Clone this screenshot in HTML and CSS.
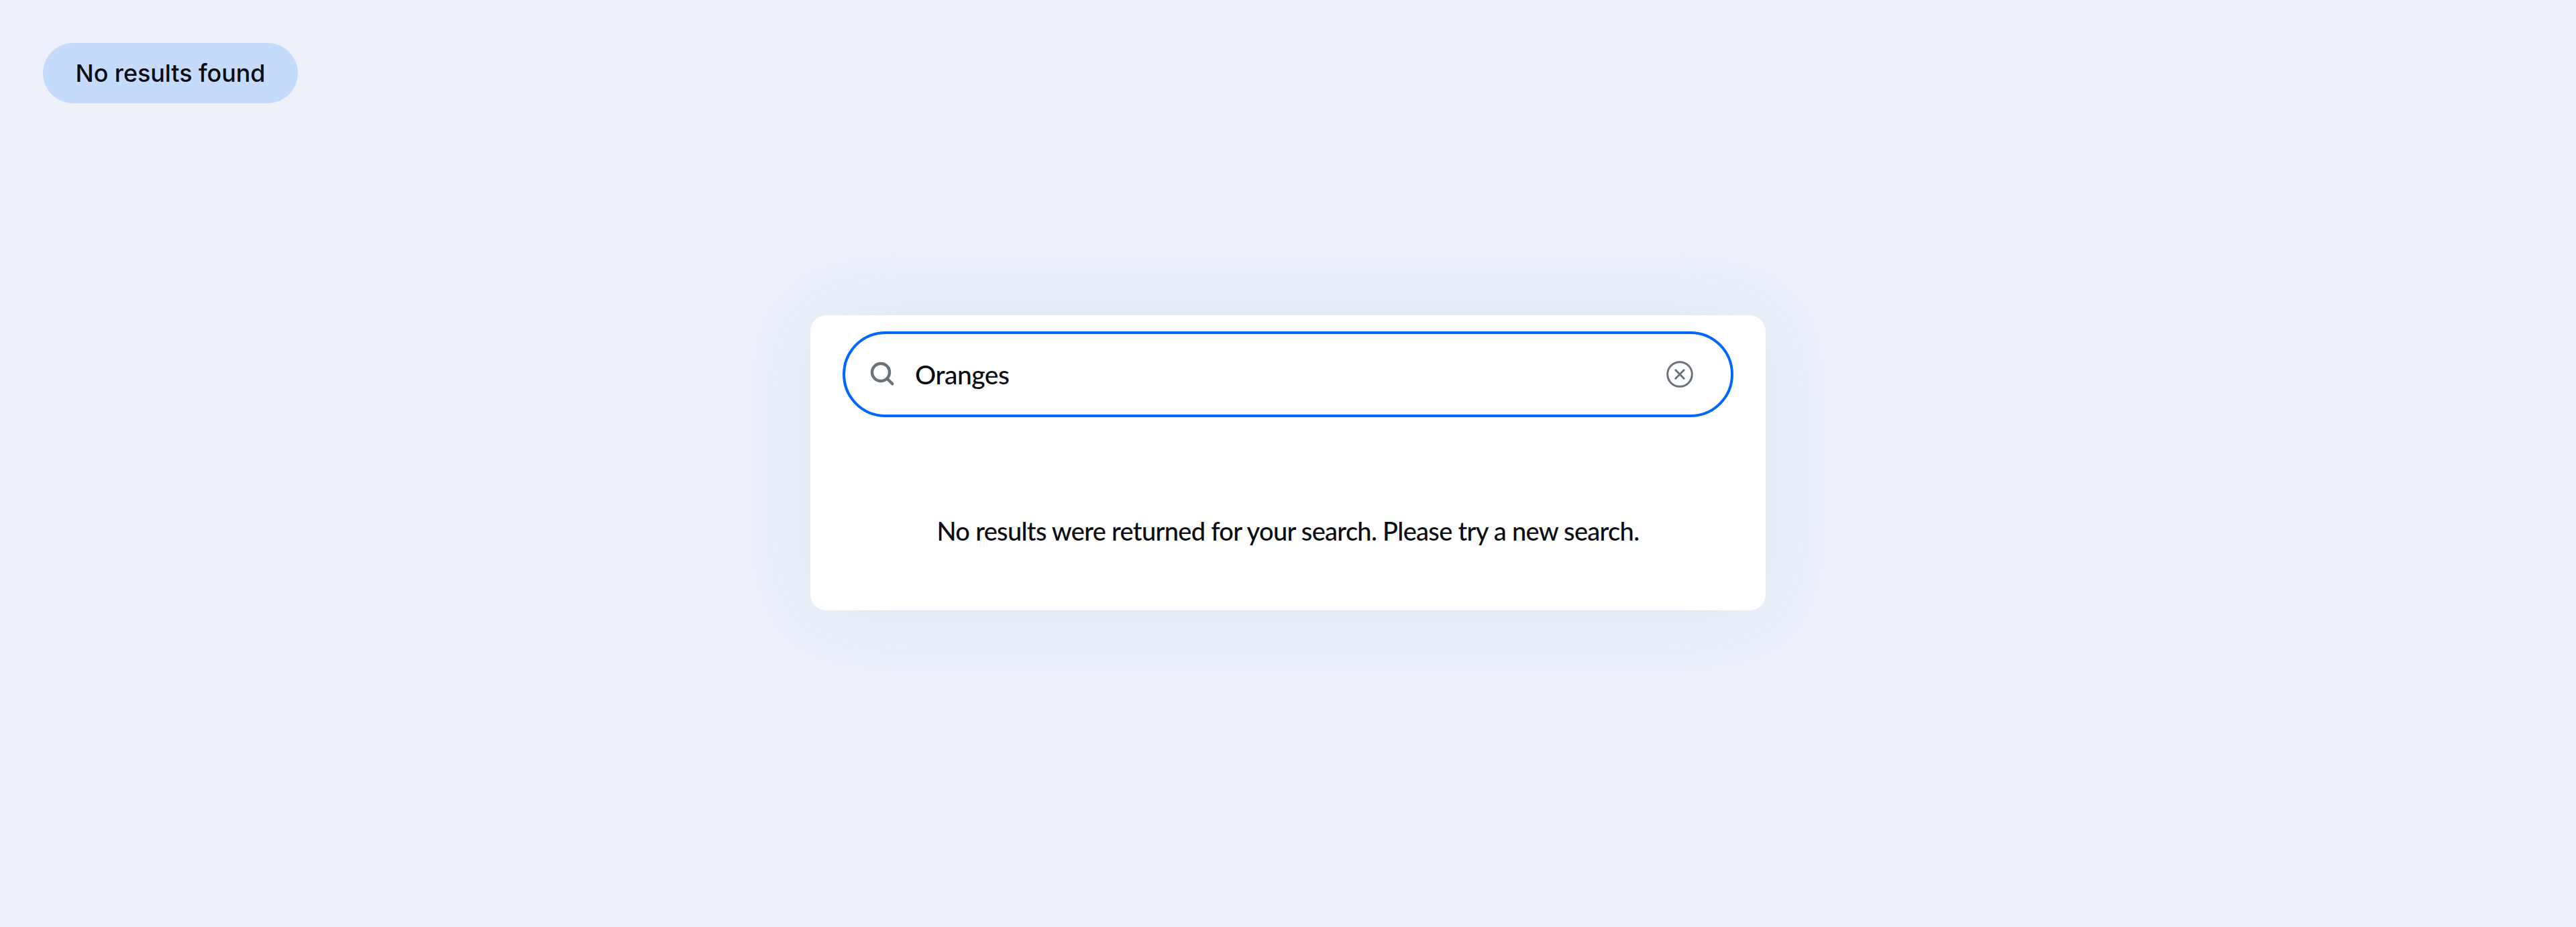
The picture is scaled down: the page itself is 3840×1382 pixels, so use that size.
FILE: index.html
```html
<!DOCTYPE html>
<html lang="en">
<head>
  <meta charset="UTF-8">
  <title>No results found</title>
  <link rel="stylesheet" href="styles.css">
</head>
<body>
  <div class="page">
    <span class="label">No results found</span>

    <div class="search-card">
      <div class="search-field">
        <svg class="search-icon" viewBox="0 0 40 40">
          <circle cx="17" cy="17" r="13"/>
          <path d="M26.5 26.5 34.3 34.3"/>
        </svg>
        <input type="text" class="search-input" value="Oranges" aria-label="Search">
        <button class="clear-button" type="button" aria-label="Clear">
          <svg class="clear-icon" viewBox="0 0 40 40">
            <circle cx="20" cy="20" r="18.3"/>
            <path d="M13.8 13.8 26.2 26.2M26.2 13.8 13.8 26.2"/>
          </svg>
        </button>
      </div>
      <p class="message">No results were returned for your search. Please try a new search.</p>
    </div>
  </div>
</body>
</html>
```

FILE: styles.css
```css
* {
  box-sizing: border-box;
}

body {
  background-color: #edf1fa;
  color: #0b0d12;
  font-family: Lato, "Liberation Sans", sans-serif;
  margin: 0;
}

.page {
  display: flex;
  flex-direction: column;
  height: 1382px;
  padding: 64px;
}

.label {
  align-self: flex-start;
  width: 380px;
  height: 90px;
  border-radius: 45px;
  background-color: #c5dbfc;
  font-family: Inter, sans-serif;
  font-size: 36px;
  font-weight: 500;
  letter-spacing: -0.1px;
  line-height: 90px;
  text-align: center;
  white-space: nowrap;
}

.search-card {
  align-self: center;
  width: 1424px;
  height: 440px;
  margin-top: 316px;
  padding: 24px 48px;
  border-radius: 24px;
  background-color: #fff;
  box-shadow: 0 0 128px 20px rgba(162, 199, 222, 0.2);
}

.search-field {
  display: flex;
  align-items: center;
  height: 128px;
  padding: 0 56px 0 36px;
  border: 4px solid #0068ff;
  border-radius: 64px;
}

.search-icon,
.clear-icon {
  display: block;
  width: 40px;
  height: 40px;
  fill: none;
  stroke: #69717b;
  stroke-width: 4.4;
  stroke-linecap: round;
}

.clear-icon {
  stroke-width: 3;
}

.search-input {
  flex: 1;
  min-width: 0;
  height: 60px;
  margin: 0 0 0 28px;
  padding: 0;
  border: none;
  outline: none;
  background: none;
  color: inherit;
  font-family: inherit;
  font-size: 39px;
  font-weight: 500;
  letter-spacing: -0.5px;
}

.clear-button {
  padding: 0;
  border: none;
  background: none;
  cursor: pointer;
}

.message {
  margin: 144px 0 0;
  font-size: 38px;
  font-weight: 500;
  letter-spacing: -0.7px;
  line-height: 50px;
  text-align: center;
  white-space: nowrap;
}
```
